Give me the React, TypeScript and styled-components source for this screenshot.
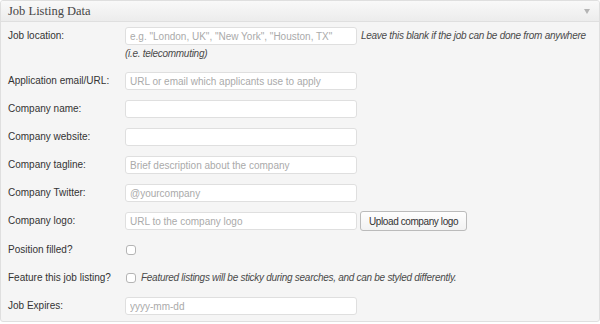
import { styled, createGlobalStyle } from "styled-components";

const GlobalStyle = createGlobalStyle`
  body {
    margin: 0;
    background: #ffffff;
    font-family: "Liberation Sans", Arial, sans-serif;
  }
`;

type FieldRow = {
  label: string;
  kind: "text" | "checkbox";
  placeholder?: string;
  desc?: string;
  inlineDesc?: string;
  button?: string;
};

const fields: FieldRow[] = [
  {
    label: "Job location:",
    kind: "text",
    placeholder: 'e.g. "London, UK", "New York", "Houston, TX"',
    inlineDesc: "Leave this blank if the job can be done from anywhere",
    desc: "(i.e. telecommuting)",
  },
  { label: "Application email/URL:", kind: "text", placeholder: "URL or email which applicants use to apply" },
  { label: "Company name:", kind: "text" },
  { label: "Company website:", kind: "text" },
  { label: "Company tagline:", kind: "text", placeholder: "Brief description about the company" },
  { label: "Company Twitter:", kind: "text", placeholder: "@yourcompany" },
  { label: "Company logo:", kind: "text", placeholder: "URL to the company logo", button: "Upload company logo" },
  { label: "Position filled?", kind: "checkbox" },
  {
    label: "Feature this job listing?",
    kind: "checkbox",
    inlineDesc: "Featured listings will be sticky during searches, and can be styled differently.",
  },
  { label: "Job Expires:", kind: "text", placeholder: "yyyy-mm-dd" },
];

export default function App() {
  return (
    <>
      <GlobalStyle />
      <Panel>
        <Header>
          <Title>Job Listing Data</Title>
          <Toggle />
        </Header>
        <Body>
          {fields.map((f) => (
            <Row key={f.label} $tall={!!f.button}>
              <Label>{f.label}</Label>
              <Control>
                <Line $tall={!!f.button}>
                  {f.kind === "text" ? (
                    <TextInput type="text" placeholder={f.placeholder} />
                  ) : (
                    <Check type="checkbox" />
                  )}
                  {f.button && <Button type="button">{f.button}</Button>}
                  {f.inlineDesc && (
                    <Description $inline $gap={f.kind === "checkbox" ? 5 : 4}>
                      {f.inlineDesc}
                    </Description>
                  )}
                </Line>
                {f.desc && <Description>{f.desc}</Description>}
              </Control>
            </Row>
          ))}
        </Body>
      </Panel>
    </>
  );
}

const Panel = styled.div`
  box-sizing: border-box;
  width: 600px;
  height: 322px;
  border: 1px solid #dfdfdf;
  border-radius: 3px;
  background: #f5f5f5;
  overflow: hidden;
`;

const Header = styled.div`
  height: 20px;
  display: flex;
  align-items: center;
  justify-content: space-between;
  padding: 0 7px;
  background: linear-gradient(to bottom, #f9f9f9, #ececec);
  border-bottom: 1px solid #dfdfdf;
`;

const Title = styled.h3`
  margin: 0;
  font-family: "Liberation Serif", "Times New Roman", serif;
  font-size: 12.5px;
  font-weight: normal;
  color: #464646;
  line-height: 20px;
`;

const Toggle = styled.span`
  width: 0;
  height: 0;
  border-left: 3px solid transparent;
  border-right: 3px solid transparent;
  border-top: 5px solid #b4b4b4;
  margin-right: 2px;
`;

const Body = styled.div`
  padding: 0 7px;
`;

const Row = styled.div<{ $tall: boolean }>`
  display: grid;
  grid-template-columns: 117px auto;
  align-items: start;
  padding: 5px 0;
`;

const Label = styled.label`
  font-size: 10px;
  color: #333;
  line-height: 18px;
  white-space: nowrap;
`;

const Control = styled.div`
  display: flex;
  flex-direction: column;
  min-width: 0;
`;

const Line = styled.div<{ $tall: boolean }>`
  display: flex;
  align-items: center;
  height: ${(p) => (p.$tall ? "20px" : "18px")};
  margin-top: ${(p) => (p.$tall ? "-1px" : "0")};
`;

const TextInput = styled.input`
  box-sizing: border-box;
  flex-shrink: 0;
  width: 232px;
  height: 18px;
  margin: 0;
  padding: 0 4px;
  border: 1px solid #dfdfdf;
  border-radius: 3px;
  background: #fff;
  font-family: "Liberation Sans", Arial, sans-serif;
  font-size: 10px;
  color: #333;
  outline: none;

  &::placeholder {
    color: #aaa;
  }
`;

const Check = styled.input`
  appearance: none;
  box-sizing: border-box;
  flex-shrink: 0;
  width: 10px;
  height: 10px;
  margin: 0 0 0 1px;
  border: 1px solid #b4b4b4;
  border-radius: 3px;
  background: #fff;
`;

const Button = styled.button`
  box-sizing: border-box;
  flex-shrink: 0;
  height: 20px;
  margin-left: 3px;
  padding: 0 8px;
  border: 1px solid #bbb;
  border-radius: 3px;
  background: linear-gradient(to bottom, #fefefe, #f2f2f2);
  font-family: "Liberation Sans", Arial, sans-serif;
  font-size: 10px;
  letter-spacing: -0.4px;
  color: #333;
`;

const Description = styled.span<{ $inline?: boolean; $gap?: number }>`
  font-size: 10px;
  letter-spacing: -0.28px;
  font-style: italic;
  color: #4a4a4a;
  line-height: 16px;
  white-space: nowrap;
  margin-left: ${(p) => (p.$inline ? `${p.$gap ?? 4}px` : "0")};
  padding-top: ${(p) => (p.$inline ? "0" : "1px")};
`;
